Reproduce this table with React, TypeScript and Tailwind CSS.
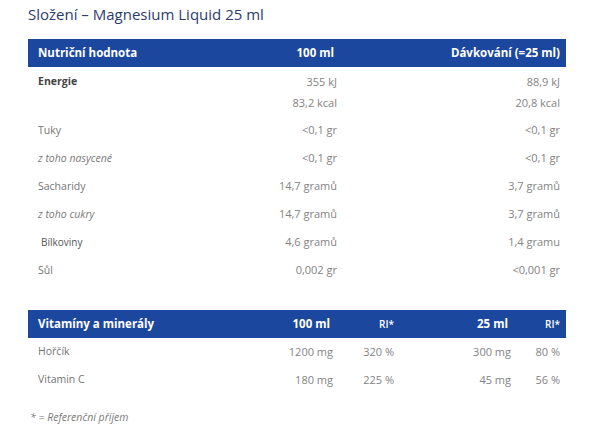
const FONT = "font-['Open_Sans','Noto_Sans',sans-serif]";

type Row = { label: string; a: string[]; b: string[]; kind?: "bold" | "italic" | "dark" };

const NUTRI: Row[] = [
  { label: "Energie", a: ["355 kJ", "83,2 kcal"], b: ["88,9 kJ", "20,8 kcal"], kind: "bold" },
  { label: "Tuky", a: ["<0,1 gr"], b: ["<0,1 gr"] },
  { label: "z toho nasycené", a: ["<0,1 gr"], b: ["<0,1 gr"], kind: "italic" },
  { label: "Sacharidy", a: ["14,7 gramů"], b: ["3,7 gramů"] },
  { label: "z toho cukry", a: ["14,7 gramů"], b: ["3,7 gramů"], kind: "italic" },
  { label: "Bílkoviny", a: ["4,6 gramů"], b: ["1,4 gramu"], kind: "dark" },
  { label: "Sůl", a: ["0,002 gr"], b: ["<0,001 gr"] },
];

const VITAMINS = [
  { label: "Hořčík", a: "1200 mg", ri1: "320 %", b: "300 mg", ri2: "80 %" },
  { label: "Vitamin C", a: "180 mg", ri1: "225 %", b: "45 mg", ri2: "56 %" },
];

function NutriRow({ row }: { row: Row }) {
  const multi = row.a.length > 1;
  const line = multi ? "h-[21px] leading-[21px]" : "h-[28px] leading-[28px]";
  const labelCls =
    row.kind === "bold"
      ? "font-bold text-[#444]"
      : row.kind === "italic"
        ? "italic text-[#7a7a7a]"
        : row.kind === "dark"
          ? "pl-[3px] text-[#555] text-[10px]"
          : "text-[#757575]";
  return (
    <div className={multi ? "flex pt-[4px] pb-[3px]" : "flex"}>
      <div className={`w-[200px] ${labelCls}`}>
        <div className={line}>{row.label}</div>
      </div>
      <div className="w-[99px] text-right text-[11px] text-[#838383]">
        {row.a.map((v) => (
          <div key={v} className={line}>
            {v}
          </div>
        ))}
      </div>
      <div className="flex-1 text-right text-[11px] text-[#838383]">
        {row.b.map((v) => (
          <div key={v} className={line}>
            {v}
          </div>
        ))}
      </div>
    </div>
  );
}

export default function App() {
  return (
    <div className={`${FONT} w-[600px] h-[440px] bg-white pl-[28px] pr-[34px] pt-[4px]`}>
      <h2 className="h-[20px] leading-[20px] text-[15px] text-[#2d3c6e]">Složení – Magnesium Liquid 25 ml</h2>

      {/* Nutriční hodnoty */}
      <div className="mt-[15px] text-[10.5px]">
        <div className="flex h-[28px] items-center bg-[#1c479e] pl-[10px] pr-[6px] text-[11.5px] font-bold text-white">
          <div className="w-[200px]">Nutriční hodnota</div>
          <div className="w-[99px] pr-[3px] text-right">100 ml</div>
          <div className="flex-1 text-right">Dávkování (=25 ml)</div>
        </div>
        <div className="pl-[10px] pr-[6px]">
          {NUTRI.map((r) => (
            <NutriRow key={r.label} row={r} />
          ))}
        </div>
      </div>

      {/* Vitamíny */}
      <div className="mt-[26px] text-[11px]">
        <div className="flex h-[28px] items-center bg-[#1c479e] pl-[10px] pr-[6px] font-bold text-white">
          <div className="w-[200px] text-[11.5px]">Vitamíny a minerály</div>
          <div className="w-[95px] pr-[3px] text-right text-[11.5px]">100 ml</div>
          <div className="w-[61px] text-right text-[10px] font-semibold">RI*</div>
          <div className="w-[117px] pr-[3px] text-right text-[11.5px]">25 ml</div>
          <div className="flex-1 text-right text-[10px] font-semibold">RI*</div>
        </div>
        <div className="pl-[10px] pr-[6px] text-[#838383]">
          {VITAMINS.map((v) => (
            <div key={v.label} className="flex h-[28px] items-center">
              <div className="w-[200px] text-[10.5px] text-[#757575]">{v.label}</div>
              <div className="w-[95px] text-right">{v.a}</div>
              <div className="w-[61px] text-right">{v.ri1}</div>
              <div className="w-[117px] text-right">{v.b}</div>
              <div className="flex-1 text-right">{v.ri2}</div>
            </div>
          ))}
        </div>
      </div>

      <p className="mt-[16px] pl-[2px] text-[10.5px] italic text-[#7a7a7a]">* = Referenční příjem</p>
    </div>
  );
}
